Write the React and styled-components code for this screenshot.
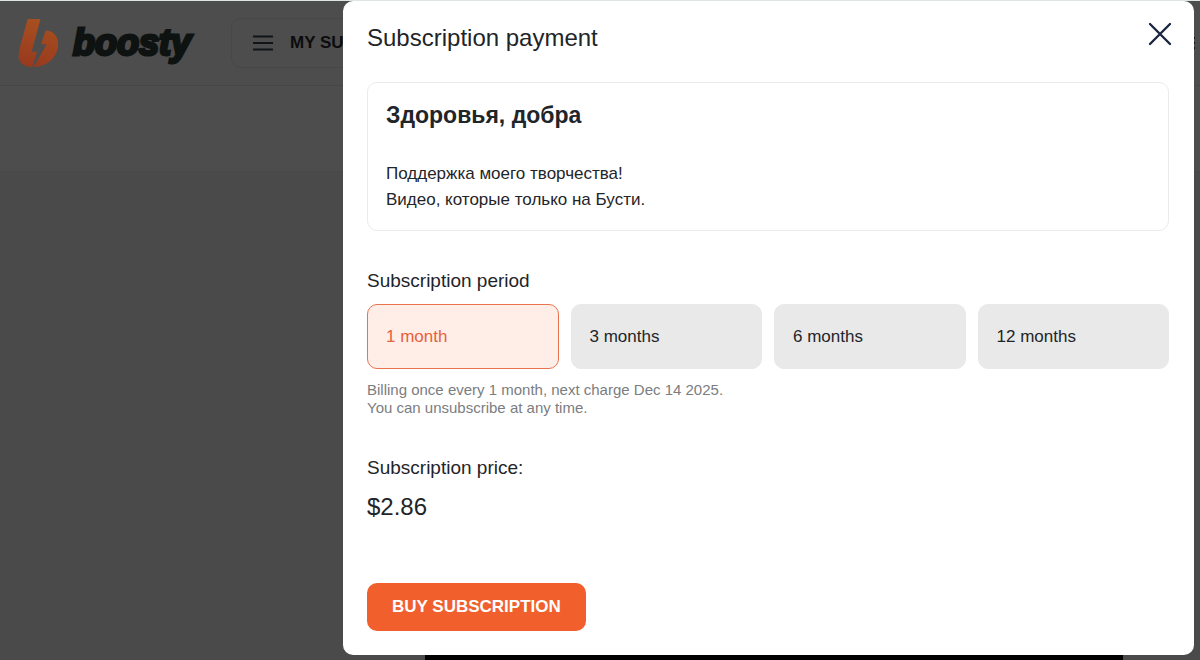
import React, { useState } from "react";
import styled, { createGlobalStyle } from "styled-components";

const GlobalStyle = createGlobalStyle`
  * {
    box-sizing: border-box;
  }
  body {
    margin: 0;
    background: #4a4a4a;
    color: #1f2529;
    font-family: "Liberation Sans", Arial, sans-serif;
  }
  button,
  input {
    font-family: inherit;
  }
`;

const Page = styled.div`
  display: flex;
  flex-direction: column;
  min-height: 100vh;
  border-top: 1px solid #dfe5e2;
`;

const Header = styled.header`
  display: flex;
  align-items: center;
  justify-content: space-between;
  height: 85px;
  padding: 0 0 0 18px;
  background: #4d4d4d;
  border-bottom: 1px solid #464646;
`;

const HeaderGroup = styled.div`
  display: flex;
  align-items: center;
  gap: 40px;
`;

const Logo = styled.a`
  display: flex;
  align-items: center;
  gap: 14px;
  color: #0e1311;
  text-decoration: none;
`;

const Wordmark = styled.span`
  font-size: 36px;
  line-height: 48px;
  font-weight: bold;
  font-style: italic;
  -webkit-text-stroke: 3px #0e1311;
`;

const MenuButton = styled.button`
  display: flex;
  align-items: center;
  gap: 16px;
  min-width: 240px;
  height: 50px;
  padding: 0 20px;
  background: none;
  border: 1px solid #474747;
  border-radius: 10px;
  color: #0a0c0d;
  font-size: 17px;
  font-weight: bold;
  white-space: nowrap;
`;

const MoreButton = styled.button`
  display: flex;
  padding: 0;
  background: none;
  border: 0;
`;

const Banner = styled.div`
  height: 85px;
  background: #4d4d4d;
`;

const Content = styled.main`
  display: flex;
  flex: 1;
  align-items: flex-end;
  padding: 0 77px 0 425px;
  border-top: 1px solid #484848;
`;

const Player = styled.div`
  flex: 1;
  height: 20px;
  background: #000;
`;

const Overlay = styled.div`
  position: fixed;
  inset: 0;
  display: flex;
  align-items: flex-start;
  justify-content: flex-end;
  padding: 1px 6px 4px;
  overflow: auto;
`;

const Dialog = styled.section`
  flex: 0 1 851px;
  padding: 19px 25px 24px 24px;
  background: #fff;
  border-radius: 10px;
`;

const DialogHead = styled.div`
  display: flex;
  align-items: flex-start;
  justify-content: space-between;
  margin-bottom: 26px;
`;

const Title = styled.h1`
  margin: 0;
  font-size: 24px;
  line-height: 36px;
  font-weight: normal;
`;

const CloseButton = styled.button`
  display: flex;
  margin: 0 -4px 0 0;
  padding: 1px 0 0;
  background: none;
  border: 0;
  cursor: pointer;
`;

const Level = styled.article`
  padding: 14px 18px 17px;
  border: 1px solid #ebebeb;
  border-radius: 10px;

  h2 {
    margin: 0 0 28px;
    font-size: 23px;
    line-height: 36px;
  }

  p {
    margin: 0;
    font-size: 17px;
    line-height: 26px;
  }
`;

const Periods = styled.fieldset`
  margin: 38px 0 0;
  padding: 0;
  border: 0;
  min-width: 0;
`;

const PeriodGrid = styled.div`
  display: grid;
  grid-template-columns: repeat(4, 1fr);
  gap: 12px;
`;

const SectionTitle = styled.div`
  font-size: 19px;
  line-height: 24px;
`;

const Legend = styled.legend`
  padding: 0 0 11px;
  font-size: 19px;
  line-height: 24px;
`;

const PeriodOption = styled.label`
  display: flex;
  align-items: center;
  height: 65px;
  padding: 0 18px;
  border: 1px solid ${({ $active }) => ($active ? "#e8734d" : "#e9e9e9")};
  border-radius: 10px;
  background: ${({ $active }) => ($active ? "#ffeee8" : "#e9e9e9")};
  color: ${({ $active }) => ($active ? "#e8603a" : "#1f2529")};
  font-size: 17px;
  cursor: pointer;

  input {
    appearance: none;
    width: 0;
    height: 0;
    margin: 0;
  }
`;

const Note = styled.p`
  margin: 12px 0 39px;
  color: #7b7d7f;
  font-size: 15px;
  line-height: 18px;
`;

const Price = styled.div`
  margin: 11px 0 60px;
  font-size: 24px;
  line-height: 32px;
`;

const BuyButton = styled.button`
  height: 48px;
  padding: 0 25px;
  background: #f15f2c;
  border: 0;
  border-radius: 10px;
  color: #fff;
  font-size: 17px;
  font-weight: bold;
  text-transform: uppercase;
  cursor: pointer;
`;

const periods = [
  { months: 1, label: "1 month" },
  { months: 3, label: "3 months" },
  { months: 6, label: "6 months" },
  { months: 12, label: "12 months" },
];

const LogoMark = () => (
  <svg width="41" height="50" viewBox="0 0 41 50" aria-hidden="true">
    <defs>
      <linearGradient id="mark" x1="0.6" y1="0" x2="0.4" y2="1">
        <stop offset="0" stopColor="#a85020" />
        <stop offset="1" stopColor="#983a1e" />
      </linearGradient>
    </defs>
    <path
      fill="url(#mark)"
      d="M9.7 1h12.8L13.6 33.7H19L14.3 49C5 49 .2 43.500.6 37.500 .8 34 1.600 30.500 2.500 27ZM27.700 12.500C35 12.500 40.300 18 40.200 26 40 38.500 30 48.500 15.800 49L28.600 26.300H23Z"
    />
  </svg>
);

const Bars = () => (
  <svg width="22" height="16" viewBox="0 0 22 16" aria-hidden="true">
    <path d="M1 1.5h20M1 8h20M1 14.5h20" stroke="#101416" strokeWidth="2" />
  </svg>
);

const Cross = () => (
  <svg width="26" height="26" viewBox="0 0 26 26" aria-hidden="true">
    <path
      d="M3 3l20 20M23 3L3 23"
      stroke="#1b2740"
      strokeWidth="2.4"
      strokeLinecap="round"
    />
  </svg>
);

export default function App() {
  const [selected, setSelected] = useState(1);

  return (
    <>
      <GlobalStyle />
      <Page>
        <Header>
          <HeaderGroup>
            <Logo href="#">
              <LogoMark />
              <Wordmark>boosty</Wordmark>
            </Logo>
            <MenuButton>
              <Bars />
              MY SU
            </MenuButton>
          </HeaderGroup>
          <MoreButton aria-label="More">
            <svg width="8" height="14" viewBox="0 0 8 14">
              <path d="M1 2h2M1 7h2M1 12h2" stroke="#14181c" strokeWidth="2" />
            </svg>
          </MoreButton>
        </Header>
        <Banner />
        <Content>
          <Player />
        </Content>
      </Page>
      <Overlay>
        <Dialog role="dialog" aria-labelledby="dialog-title">
          <DialogHead>
            <Title id="dialog-title">Subscription payment</Title>
            <CloseButton aria-label="Close">
              <Cross />
            </CloseButton>
          </DialogHead>
          <Level>
            <h2>Здоровья, добра</h2>
            <p>Поддержка моего творчества!</p>
            <p>Видео, которые только на Бусти.</p>
          </Level>
          <Periods>
            <Legend>Subscription period</Legend>
            <PeriodGrid>
              {periods.map(({ months, label }) => (
                <PeriodOption key={months} $active={months === selected}>
                  <input
                    type="radio"
                    name="period"
                    checked={months === selected}
                    onChange={() => setSelected(months)}
                  />
                  {label}
                </PeriodOption>
              ))}
            </PeriodGrid>
          </Periods>
          <Note>
            Billing once every 1 month, next charge Dec 14 2025.
            <br />
            You can unsubscribe at any time.
          </Note>
          <SectionTitle>Subscription price:</SectionTitle>
          <Price>$2.86</Price>
          <BuyButton>Buy subscription</BuyButton>
        </Dialog>
      </Overlay>
    </>
  );
}
